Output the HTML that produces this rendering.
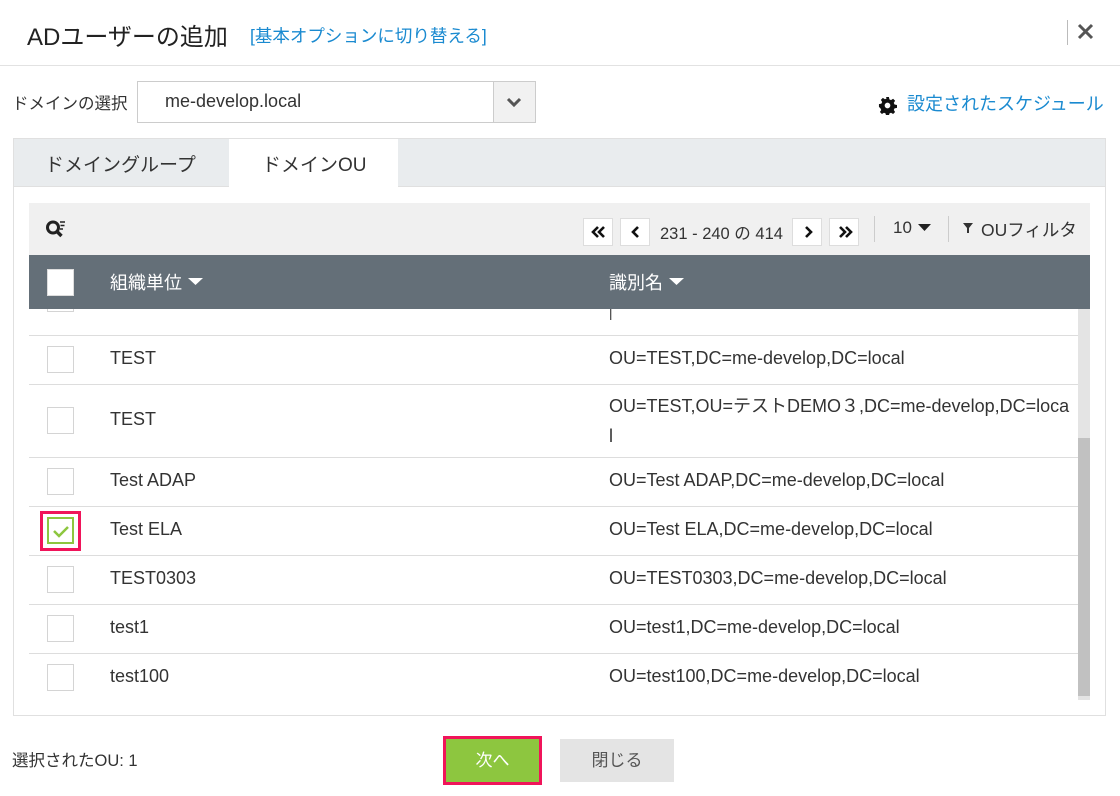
<!DOCTYPE html>
<html><head><meta charset="utf-8"><style>
*{box-sizing:border-box;margin:0;padding:0}
body{width:1120px;height:796px;background:#fff;font-family:"Liberation Sans","Noto Sans CJK JP",sans-serif;color:#333;position:relative;overflow:hidden}
.a{position:absolute}
.cb{position:absolute;left:47px;width:27px;height:27px;border:1px solid #d4d4d4;background:#fff}
.row{position:absolute;left:29px;width:1049px;border-bottom:1px solid #ddd;font-size:18px;color:#333}
.row .n{position:absolute;left:81px}
.row .d{position:absolute;left:580px;line-height:30px}
.btn{position:absolute;border:1px solid #ddd;background:#fff;width:30px;height:28px;top:218px}
.btn svg{position:absolute;left:7px;top:6px}
</style></head><body>
<div class="a" style="left:27px;top:17px;font-size:24px;color:#222">ADユーザーの追加</div>
<div class="a" style="left:250px;top:23px;font-size:17.5px;color:#1a8ad0">[基本オプションに切り替える]</div>
<div class="a" style="left:1067px;top:20px;width:1px;height:25px;background:#bbb"></div>
<svg class="a" style="left:1077px;top:23px" width="17" height="17"><path d="M2 2L15 15M15 2L2 15" stroke="#555" stroke-width="3"/></svg>
<div class="a" style="left:0;top:65px;width:1120px;height:1px;background:#e2e2e2"></div>

<div class="a" style="left:12px;top:90px;font-size:16.5px;color:#333">ドメインの選択</div>
<div class="a" style="left:137px;top:81px;width:399px;height:42px;border:1px solid #ccc;background:#fff"></div>
<div class="a" style="left:165px;top:91px;font-size:18px;color:#333">me-develop.local</div>
<div class="a" style="left:493px;top:82px;width:42px;height:40px;background:#f1f1f1;border-left:1px solid #ccc"></div>
<svg class="a" style="left:506px;top:96px" width="16" height="12"><path d="M2 3 L8 9 L14 3" stroke="#555" stroke-width="3" fill="none"/></svg>
<svg class="a" style="left:878px;top:96px" width="19" height="19" viewBox="0 0 20 20"><path fill="#111" d="M8.5 1h3l.5 2.5 1.7.8 2.2-1.4 2.1 2.1-1.4 2.2.8 1.7 2.6.6v3l-2.6.5-.8 1.7 1.4 2.2-2.1 2.1-2.2-1.4-1.7.8-.5 2.6h-3l-.5-2.6-1.7-.8-2.2 1.4-2.1-2.1 1.4-2.2-.8-1.7L1 11.5v-3l2.6-.5.8-1.7L3 4.1 5.1 2l2.2 1.4 1.7-.8z"/><circle cx="10" cy="10" r="3" fill="#fff"/></svg>
<div class="a" style="left:907px;top:90px;font-size:18px;color:#1a8ad0">設定されたスケジュール</div>

<div class="a" style="left:13px;top:138px;width:1093px;height:578px;border:1px solid #e0e0e0"></div>
<div class="a" style="left:13px;top:138px;width:1093px;height:49px;background:#e9ecee;border:1px solid #e0e0e0"></div>
<div class="a" style="left:229px;top:139px;width:169px;height:48px;background:#fff"></div>
<div class="a" style="left:45px;top:150px;font-size:19px;color:#333">ドメイングループ</div>
<div class="a" style="left:262px;top:150px;font-size:19px;color:#333">ドメインOU</div>

<div class="a" style="left:29px;top:203px;width:1061px;height:52px;background:#f0f0f0"></div>
<svg class="a" style="left:45px;top:219px" width="24" height="22" viewBox="0 0 24 22"><circle cx="8" cy="8.5" r="5.5" stroke="#222" stroke-width="3" fill="none"/><path d="M12 12.5 L16.5 17" stroke="#222" stroke-width="3.4"/><path d="M15 3h5M15.5 6.5h4M15 10h3" stroke="#222" stroke-width="1.5"/></svg>
<div class="btn" style="left:583px"><svg width="16" height="14"><path d="M7 2L2 7L7 12M13 2L8 7L13 12" stroke="#111" stroke-width="2.6" fill="none"/></svg></div>
<div class="btn" style="left:620px"><svg width="16" height="14"><path d="M10 2L5 7L10 12" stroke="#111" stroke-width="2.6" fill="none"/></svg></div>
<div class="a" style="left:660px;top:220px;font-size:16.5px;color:#333">231 - 240 の 414</div>
<div class="btn" style="left:792px"><svg width="16" height="14"><path d="M6 2L11 7L6 12" stroke="#111" stroke-width="2.6" fill="none"/></svg></div>
<div class="btn" style="left:829px"><svg width="16" height="14"><path d="M3 2L8 7L3 12M9 2L14 7L9 12" stroke="#111" stroke-width="2.6" fill="none"/></svg></div>
<div class="a" style="left:874px;top:216px;width:1px;height:26px;background:#ccc"></div>
<div class="a" style="left:893px;top:218px;font-size:17px;color:#333">10</div>
<svg class="a" style="left:918px;top:224px" width="13" height="8"><path d="M0 0H13L6.5 7z" fill="#222"/></svg>
<div class="a" style="left:948px;top:216px;width:1px;height:26px;background:#ccc"></div>
<svg class="a" style="left:963px;top:223px" width="10" height="10"><path d="M0 0H10L6 5V10H4V5z" fill="#333"/></svg>
<div class="a" style="left:981px;top:217px;font-size:17.5px;color:#333">OUフィルタ</div>

<div class="a" style="left:29px;top:255px;width:1061px;height:54px;background:#646f78"></div>
<div class="cb" style="top:269px;border-color:#ddd"></div>
<div class="a" style="left:110px;top:269px;font-size:18px;color:#fff">組織単位</div>
<svg class="a" style="left:188px;top:278px" width="15" height="8"><path d="M0 0H15L7.5 7z" fill="#fff"/></svg>
<div class="a" style="left:609px;top:269px;font-size:18px;color:#fff">識別名</div>
<svg class="a" style="left:669px;top:278px" width="15" height="8"><path d="M0 0H15L7.5 7z" fill="#fff"/></svg>

<div class="a" style="left:29px;top:309px;width:1061px;height:391px;overflow:hidden">
 <div class="a" style="left:18px;top:-14px;width:27px;height:17px;border:1px solid #d4d4d4"></div>
 <div class="a" style="left:580px;top:-2px;font-size:15px;color:#555">l</div>
 <div class="a" style="left:0;top:26px;width:1049px;height:1px;background:#ddd"></div>
 <div class="a" style="left:1049px;top:0;width:12px;height:391px;background:#e4e4e4"></div>
 <div class="a" style="left:1049px;top:129px;width:12px;height:258px;background:#c1c1c1"></div>
</div>
<div class="row" style="top:335px;height:50px"><div class="cb" style="left:18px;top:11px"></div><span class="n" style="top:13px">TEST</span><span class="d" style="top:8px">OU=TEST,DC=me-develop,DC=local</span></div>
<div class="row" style="top:385px;height:73px"><div class="cb" style="left:18px;top:22px"></div><span class="n" style="top:24px">TEST</span><span class="d" style="top:6px">OU=TEST,OU=テストDEMO３,DC=me-develop,DC=loca<br>l</span></div>
<div class="row" style="top:458px;height:49px"><div class="cb" style="left:18px;top:10px"></div><span class="n" style="top:12px">Test ADAP</span><span class="d" style="top:7px">OU=Test ADAP,DC=me-develop,DC=local</span></div>
<div class="row" style="top:507px;height:49px">
 <div class="a" style="left:11px;top:4px;width:41px;height:40px;border:3px solid #f0145a"></div>
 <div class="cb" style="left:18px;top:10px;border-color:#8dc63f;border-width:2px"></div>
 <svg class="a" style="left:23px;top:17px" width="18" height="14"><path d="M2 7 L7 12 L16 3" stroke="#8dc63f" stroke-width="2.5" fill="none"/></svg>
 <span class="n" style="top:12px">Test ELA</span><span class="d" style="top:7px">OU=Test ELA,DC=me-develop,DC=local</span></div>
<div class="row" style="top:556px;height:49px"><div class="cb" style="left:18px;top:10px"></div><span class="n" style="top:12px">TEST0303</span><span class="d" style="top:7px">OU=TEST0303,DC=me-develop,DC=local</span></div>
<div class="row" style="top:605px;height:49px"><div class="cb" style="left:18px;top:10px"></div><span class="n" style="top:12px">test1</span><span class="d" style="top:7px">OU=test1,DC=me-develop,DC=local</span></div>
<div class="row" style="top:654px;height:46px;border:none"><div class="cb" style="left:18px;top:10px"></div><span class="n" style="top:12px">test100</span><span class="d" style="top:7px">OU=test100,DC=me-develop,DC=local</span></div>

<div class="a" style="left:12px;top:747px;font-size:16.5px;color:#333">選択されたOU: 1</div>
<div class="a" style="left:443px;top:736px;width:99px;height:49px;border:3px solid #f0145a;background:#8dc63f;color:#fff;font-size:17px;text-align:center;line-height:43px">次へ</div>
<div class="a" style="left:560px;top:739px;width:114px;height:43px;background:#e4e4e4;color:#555;font-size:17px;text-align:center;line-height:43px">閉じる</div>
</body></html>
